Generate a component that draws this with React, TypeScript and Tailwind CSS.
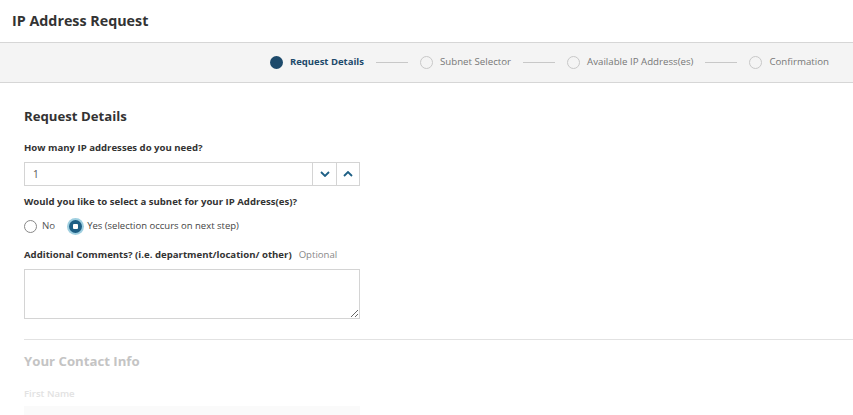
import React from "react";

const font = { fontFamily: '"Open Sans", "Noto Sans", sans-serif' };

function Step({ label, active }: { label: string; active?: boolean }) {
  return (
    <div className="flex items-center gap-[7px]">
      {active ? (
        <span className="w-[13px] h-[13px] rounded-full bg-[#1d4a6b] block" />
      ) : (
        <span className="w-[13px] h-[13px] rounded-full border border-[#c8c8c8] bg-[#f4f4f4] block" />
      )}
      <span className={active ? "text-[9.5px] font-bold text-[#1d4a6b]" : "text-[9.7px] text-[#777]"}>{label}</span>
    </div>
  );
}

function Line() {
  return <span className="block w-[32px] h-px bg-[#c8c8c8] mx-[12px]" />;
}

export default function App() {
  return (
    <div style={font} className="w-[853px] h-[415px] overflow-hidden bg-white text-[#333]">
      <div className="h-[43px] flex items-center px-[12px] border-b border-[#d6d6d6]">
        <h1 className="text-[14.3px] font-bold text-[#333]">IP Address Request</h1>
      </div>
      <div className="h-[40px] bg-[#f4f4f4] border-b border-[#d6d6d6] flex items-center justify-end pr-[24px]">
        <Step label="Request Details" active />
        <Line />
        <Step label="Subnet Selector" />
        <Line />
        <Step label="Available IP Address(es)" />
        <Line />
        <Step label="Confirmation" />
      </div>
      <div className="pl-[24px] pt-[24px]">
        <h2 className="text-[13.2px] font-bold text-[#333] leading-[18px]">Request Details</h2>
        <div className="mt-[16px] text-[9.6px] font-bold leading-[14px]">How many IP addresses do you need?</div>
        <div className="mt-[7px] w-[336px] h-[24px] border border-[#d4d4d4] flex items-center">
          <span className="flex-1 pl-[8px] text-[10px] text-[#555]">1</span>
          <span className="w-[24px] h-full border-l border-[#d4d4d4] flex items-center justify-center">
            <svg width="10" height="6" viewBox="0 0 10 6"><path d="M1 1l4 4 4-4" fill="none" stroke="#1d5f85" strokeWidth="1.8" /></svg>
          </span>
          <span className="w-[23px] h-full border-l border-[#d4d4d4] flex items-center justify-center">
            <svg width="10" height="6" viewBox="0 0 10 6"><path d="M1 5l4-4 4 4" fill="none" stroke="#1d5f85" strokeWidth="1.8" /></svg>
          </span>
        </div>
        <div className="mt-[9px] text-[9.6px] font-bold leading-[14px]">Would you like to select a subnet for your IP Address(es)?</div>
        <div className="mt-[9px] flex items-center h-[16px]">
          <span className="w-[13px] h-[13px] rounded-full border border-[#888] block" />
          <span className="ml-[5px] text-[9.7px] text-[#555]">No</span>
          <span className="ml-[12px] w-[17px] h-[17px] rounded-full bg-[#9fcfe0] flex items-center justify-center">
            <span className="w-[13px] h-[13px] rounded-full bg-[#1d5f85] flex items-center justify-center">
              <span className="w-[5px] h-[5px] rounded-[1px] bg-white block" />
            </span>
          </span>
          <span className="ml-[3px] text-[9.5px] text-[#444]">Yes (selection occurs on next step)</span>
        </div>
        <div className="mt-[14px] text-[9.6px] leading-[14px]">
          <span className="font-bold">Additional Comments? (i.e. department/location/ other)</span>
          <span className="ml-[7px] text-[#888]">Optional</span>
        </div>
        <textarea className="mt-[7px] block w-[336px] h-[50px] border border-[#d4d4d4] resize-y outline-none" />
        <div className="mt-[20px] border-t border-[#e2e2e2]" />
        <h2 className="mt-[12px] text-[13.2px] font-bold text-[#c4c4c4] leading-[18px]">Your Contact Info</h2>
        <div className="mt-[17px] text-[9.6px] font-semibold text-[#e2e2e2] leading-[14px]">First Name</div>
        <div className="mt-[5px] w-[336px] h-[24px] bg-[#fafafa]" />
      </div>
    </div>
  );
}
